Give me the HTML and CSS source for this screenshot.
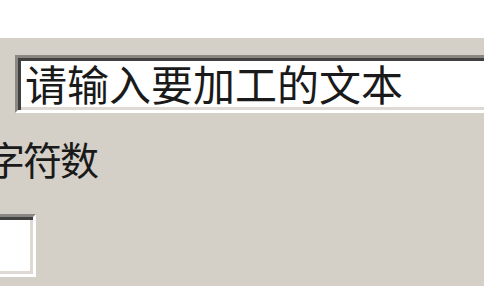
FILE: index.html
```html
<!DOCTYPE html>
<html lang="zh">
<head>
<meta charset="utf-8">
<link rel="stylesheet" href="styles.css">
</head>
<body>
<div class="top"></div>
<div class="panel">
  <div class="field wide"><span class="value">请输入要加工的文本</span></div>
  <div class="label">字符数</div>
  <div class="field small"></div>
</div>
</body>
</html>
```
FILE: styles.css
```css
html, body {
  margin: 0;
  padding: 0;
  background: #ffffff;
  width: 484px;
  height: 300px;
  overflow: hidden;
  font-family: "Noto Sans CJK SC", "Noto Sans", sans-serif;
}
.top {
  height: 38px;
}
.panel {
  height: 248px;
  background: #d4d0c8;
  overflow: hidden;
  display: flex;
  flex-direction: column;
  align-items: flex-start;
}
.field {
  box-sizing: border-box;
  background: #ffffff;
  border: 3px solid;
  border-color: #8a8782 #ffffff #ffffff #8a8782;
  box-shadow: inset 3px 3px 0 #404040, inset -3px -3px 0 #dedad3;
  flex: none;
}
.wide {
  margin-top: 17px;
  margin-left: 15px;
  width: 500px;
  height: 58px;
  padding: 4px 0 0 7px;
}
.value {
  display: block;
  font-size: 42px;
  line-height: 42px;
  color: #1a1a1a;
  white-space: nowrap;
}
.label {
  margin-top: 25px;
  margin-left: -14px;
  font-size: 39px;
  line-height: 40px;
  letter-spacing: -2px;
  color: #1a1a1a;
  white-space: nowrap;
}
.small {
  margin-top: 36px;
  margin-left: -20px;
  width: 56px;
  height: 63px;
}
```
